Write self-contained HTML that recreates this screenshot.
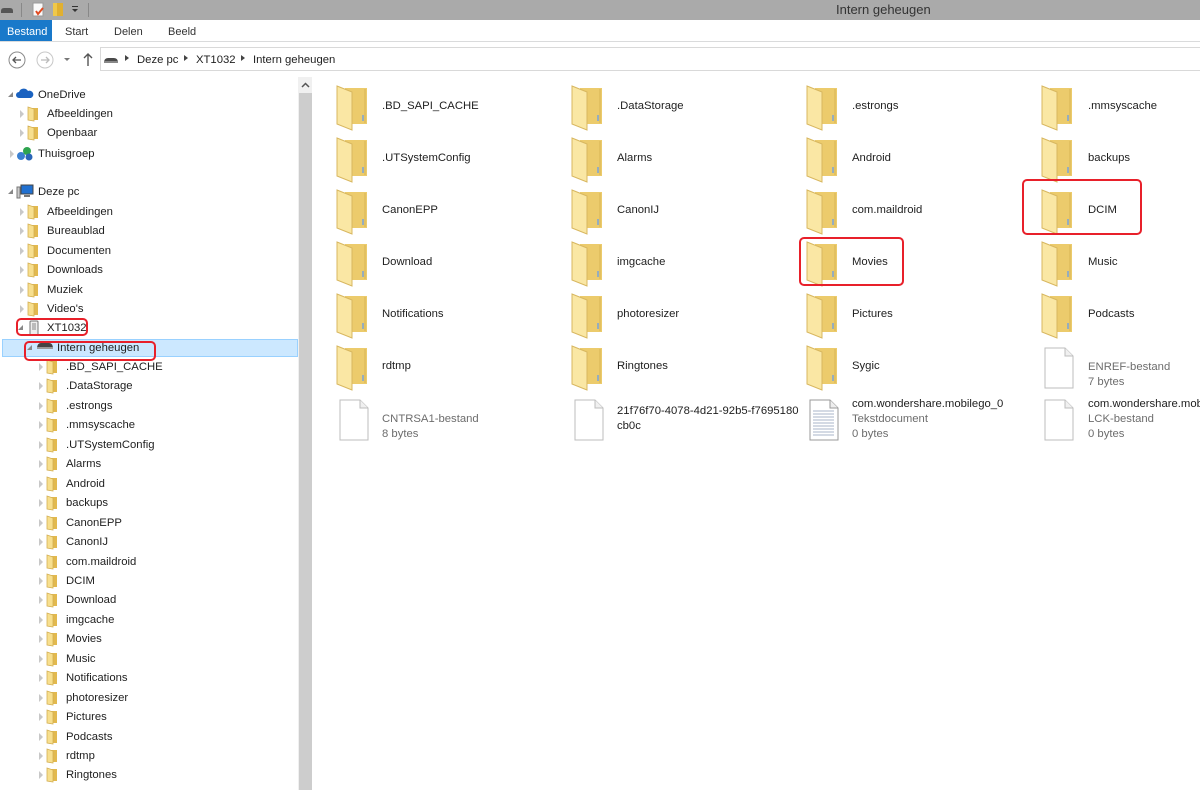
<!DOCTYPE html>
<html><head><meta charset="utf-8"><style>
*{margin:0;padding:0;box-sizing:border-box}
body{width:1200px;height:790px;overflow:hidden;background:#fff;font-family:"Liberation Sans",sans-serif;font-size:11.3px;color:#1e1e1e;position:relative}
.a{position:absolute;white-space:nowrap}
.tb{left:0;top:0;width:1200px;height:20px;background:#aaaaaa}
.t{line-height:16px}
.g{color:#6d6d6d}
.tri{position:absolute;width:0;height:0;border-top:4px solid transparent;border-bottom:4px solid transparent;border-left:4px solid #c8c8c8}
.red{position:absolute;border:2px solid #e8202a;border-radius:5px}
</style></head><body>
<div class="a tb"></div>
<div class="a" style="left:0;top:3px;width:14px;height:12px"><svg width="14" height="12"><path d="M1 8 Q1 5 4 5 H10 Q13 5 13 8 V10 H1z" fill="#555"/></svg></div>
<div class="a" style="left:21px;top:3px;width:1px;height:14px;background:#888"></div>
<div class="a" style="left:32px;top:2px"><svg width="12" height="15"><rect x="1" y="1" width="10" height="13" fill="#fafafa" stroke="#999"/><path d="M4 9l2 3 5-6" stroke="#e04a20" stroke-width="2" fill="none"/></svg></div>
<div class="a" style="left:52px;top:2px"><svg width="12" height="15"><rect x="1" y="1" width="10" height="13" fill="#f0c84a"/><rect x="5" y="1" width="6" height="13" fill="#e1b030"/></svg></div>
<div class="a" style="left:72px;top:6px;width:6px;height:1px;background:#333"></div>
<div class="a" style="left:72px;top:9px;border-left:3px solid transparent;border-right:3px solid transparent;border-top:3px solid #333"></div>
<div class="a" style="left:88px;top:3px;width:1px;height:14px;background:#888"></div>
<div class="a t" style="left:836px;top:2px;font-size:13px;color:#333">Intern geheugen</div>

<div class="a" style="left:0;top:20px;width:52px;height:21px;background:#1979ca"></div>
<div class="a t" style="left:7px;top:24px;color:#fff;font-size:11px">Bestand</div>
<div class="a t" style="left:65px;top:24px;font-size:11px;color:#333">Start</div>
<div class="a t" style="left:114px;top:24px;font-size:11px;color:#333">Delen</div>
<div class="a t" style="left:168px;top:24px;font-size:11px;color:#333">Beeld</div>
<div class="a" style="left:0;top:41px;width:1200px;height:1px;background:#dadbdc"></div>

<div class="a" style="left:8px;top:51px"><svg width="18" height="18"><circle cx="9" cy="9" r="8" fill="#fff" stroke="#8a8a8a"/><path d="M13 9H5M8 6L5 9l3 3" stroke="#555" stroke-width="1.3" fill="none"/></svg></div>
<div class="a" style="left:36px;top:51px"><svg width="18" height="18"><circle cx="9" cy="9" r="8" fill="#fff" stroke="#c8c8c8"/><path d="M5 9h8M10 6l3 3-3 3" stroke="#bbb" stroke-width="1.3" fill="none"/></svg></div>
<div class="a" style="left:64px;top:58px;border-left:3px solid transparent;border-right:3px solid transparent;border-top:3px solid #777"></div>
<div class="a" style="left:82px;top:52px"><svg width="12" height="15"><path d="M6 14V2M2 6l4-4 4 4" stroke="#555" stroke-width="1.4" fill="none"/></svg></div>
<div class="a" style="left:100px;top:47px;width:1100px;height:24px;border:1px solid #d9d9d9;border-right:none"></div>
<div class="a" style="left:103px;top:55px"><svg width="16" height="9"><path d="M1 8 Q1 3 5 3 H11 Q15 3 15 8z" fill="#4a4a4a"/><rect x="1" y="6" width="14" height="2" fill="#888"/></svg></div>
<div class="a" style="left:125px;top:55px;border-top:3px solid transparent;border-bottom:3px solid transparent;border-left:4px solid #444"></div>
<div class="a t" style="left:137px;top:52px">Deze pc</div>
<div class="a" style="left:184px;top:55px;border-top:3px solid transparent;border-bottom:3px solid transparent;border-left:4px solid #444"></div>
<div class="a t" style="left:196px;top:52px">XT1032</div>
<div class="a" style="left:241px;top:55px;border-top:3px solid transparent;border-bottom:3px solid transparent;border-left:4px solid #444"></div>
<div class="a t" style="left:253px;top:52px">Intern geheugen</div>

<div class="a" style="left:298px;top:77px;width:14px;height:713px;background:#f0f0f0"></div>
<div class="a" style="left:299px;top:93px;width:13px;height:697px;background:#cdcdcd"></div>
<div class="a" style="left:301px;top:80px"><svg width="9" height="7"><path d="M1 5l3.5-3.5L8 5" stroke="#555" stroke-width="1.5" fill="none"/></svg></div>

<div class="a" style="left:2px;top:339px;width:296px;height:18px;background:#cce8ff;border:1px solid #99d1ff"></div>

<div id="tree"></div>
<div id="grid"></div>

<div class="red" style="left:16px;top:318px;width:72px;height:18px"></div>
<div class="red" style="left:24px;top:341px;width:132px;height:20px"></div>
<div class="red" style="left:1022px;top:179px;width:120px;height:56px"></div>
<div class="red" style="left:799px;top:237px;width:105px;height:49px"></div>

<script>
var sf='<svg width="13" height="16"><path d="M2 2h9v12H2z" fill="#e2b94e"/><path d="M1 1l6 2v12l-6-1z" fill="#f7df8e" stroke="#d4b054" stroke-width=".8"/></svg>';
var tree=[
[95,8,'OneDrive','od'],[114,18,'Afbeeldingen','f'],[133,18,'Openbaar','f'],[154,8,'Thuisgroep','hg'],
[192,8,'Deze pc','pc'],[212,18,'Afbeeldingen','f'],[231,18,'Bureaublad','f'],[251,18,'Documenten','f'],[270,18,'Downloads','f'],[290,18,'Muziek','f'],[309,18,'Video\'s','f'],[328,18,'XT1032','ph'],[348,27,'Intern geheugen','dr']];
var subs=['.BD_SAPI_CACHE','.DataStorage','.estrongs','.mmsyscache','.UTSystemConfig','Alarms','Android','backups','CanonEPP','CanonIJ','com.maildroid','DCIM','Download','imgcache','Movies','Music','Notifications','photoresizer','Pictures','Podcasts','rdtmp','Ringtones'];
subs.forEach(function(s,i){tree.push([367+i*19.45,37,s,'f'])});
var h='';
tree.forEach(function(r){
 var y=r[0],x=r[1],ic='';
 var open=(r[3]=='od'||r[3]=='pc'||r[3]=='ph'||r[3]=='dr');
 if(open) h+='<div class="a" style="left:'+(x)+'px;top:'+(y-3)+'px;border-left:5px solid transparent;border-bottom:5px solid #888"></div>';
 else h+='<div class="tri" style="left:'+(x+2)+'px;top:'+(y-4)+'px"></div>';
 if(r[3]=='f') ic=sf;
 else if(r[3]=='od') ic='<svg width="18" height="12"><path d="M3 11a3 3 0 010-6 5 5 0 019-1 3.5 3.5 0 013 7z" fill="#1a62c0"/></svg>';
 else if(r[3]=='hg') ic='<svg width="18" height="16"><circle cx="5" cy="10" r="4" fill="#3a7fd0"/><circle cx="11" cy="5" r="4" fill="#2ea44f"/><circle cx="13" cy="11" r="3.5" fill="#2a66b8"/></svg>';
 else if(r[3]=='pc') ic='<svg width="18" height="16"><rect x="5" y="1" width="12" height="9" fill="#2170d0" stroke="#444"/><rect x="1" y="3" width="3" height="11" fill="#ccc" stroke="#777"/><rect x="8" y="11" width="6" height="2" fill="#777"/></svg>';
 else if(r[3]=='ph') ic='<svg width="14" height="16"><rect x="3" y="1" width="8" height="14" rx="1" fill="#eee" stroke="#777"/><rect x="5" y="3" width="4" height="7" fill="#bbb"/></svg>';
 else if(r[3]=='dr') ic='<svg width="18" height="10"><path d="M1 9 Q1 3 5 3 H13 Q17 3 17 9z" fill="#444"/><rect x="1" y="7" width="16" height="2" fill="#999"/></svg>';
 var iconx=x+9, textx=x+29;
 if(r[3]=='od'||r[3]=='hg'||r[3]=='pc'){iconx=x+8;textx=x+30;}
 if(r[3]=='dr'){iconx=x+9;textx=x+30;}
 h+='<div class="a" style="left:'+iconx+'px;top:'+(y-8)+'px">'+ic+'</div>';
 h+='<div class="a t" style="left:'+textx+'px;top:'+(y-8)+'px">'+r[2]+'</div>';
});
document.getElementById('tree').innerHTML=h;

var lf='<svg width="36" height="46"><path d="M10 3h22v36H10z" fill="#eccb6c"/><path d="M30 4v34" stroke="#d9b555"/><path d="M2 1l15 6v38L2 39z" fill="#fae7a4" stroke="#d8b760" stroke-width="1"/><path d="M28 30v6" stroke="#7aa3d8" stroke-width="1.5"/></svg>';
var doc='<svg width="30" height="42"><path d="M1 1h20l8 8v32H1z" fill="#fff" stroke="#bdbdbd"/><path d="M21 1v8h8" fill="#f0f0f0" stroke="#bdbdbd"/></svg>';
var txt='<svg width="30" height="42"><path d="M1 1h20l8 8v32H1z" fill="#fff" stroke="#9a9a9a"/><path d="M21 1v8h8" fill="#eee" stroke="#9a9a9a"/><g stroke="#a9b5c8">'+[12,15,18,21,24,27,30,33,36].map(function(y){return '<path d="M4 '+y+'h21"/>'}).join('')+'</g></svg>';
var items=[
'.BD_SAPI_CACHE','.DataStorage','.estrongs','.mmsyscache',
'.UTSystemConfig','Alarms','Android','backups',
'CanonEPP','CanonIJ','com.maildroid','DCIM',
'Download','imgcache','Movies','Music',
'Notifications','photoresizer','Pictures','Podcasts',
'rdtmp','Ringtones','Sygic',['doc','ENREF-bestand','7 bytes'],
['doc','CNTRSA1-bestand','8 bytes'],['doc2','21f76f70-4078-4d21-92b5-f7695180','cb0c'],['txt','com.wondershare.mobilego_0','Tekstdocument','0 bytes'],['doc3','com.wondershare.mobilego_0','LCK-bestand','0 bytes']];
var cx=[335,570,805,1040],tx=[382,617,852,1088];
var g='';
items.forEach(function(it,i){
 var c=i%4,r=Math.floor(i/4),cy=106+r*52;
 if(typeof it=='string'){
  g+='<div class="a" style="left:'+cx[c]+'px;top:'+(cy-21)+'px">'+lf+'</div>';
  g+='<div class="a t" style="left:'+tx[c]+'px;top:'+(cy-8)+'px">'+it+'</div>';
 } else {
  var ic=it[0]=='txt'?txt:doc;
  g+='<div class="a" style="left:'+(cx[c]+4)+'px;top:'+(cy-19)+'px">'+ic+'</div>';
  if(it[0]=='doc'){
   g+='<div class="a t g" style="left:'+tx[c]+'px;top:'+(cy-7)+'px">'+it[1]+'</div>';
   g+='<div class="a t g" style="left:'+tx[c]+'px;top:'+(cy+8)+'px">'+it[2]+'</div>';
  } else if(it[0]=='doc2'){
   g+='<div class="a t" style="left:'+tx[c]+'px;top:'+(cy-15)+'px">'+it[1]+'</div>';
   g+='<div class="a t" style="left:'+tx[c]+'px;top:'+(cy)+'px">'+it[2]+'</div>';
  } else {
   g+='<div class="a t" style="left:'+tx[c]+'px;top:'+(cy-22)+'px">'+it[1]+'</div>';
   g+='<div class="a t g" style="left:'+tx[c]+'px;top:'+(cy-7)+'px">'+it[2]+'</div>';
   g+='<div class="a t g" style="left:'+tx[c]+'px;top:'+(cy+8)+'px">'+it[3]+'</div>';
  }
 }
});
document.getElementById('grid').innerHTML=g;
</script>
</body></html>
